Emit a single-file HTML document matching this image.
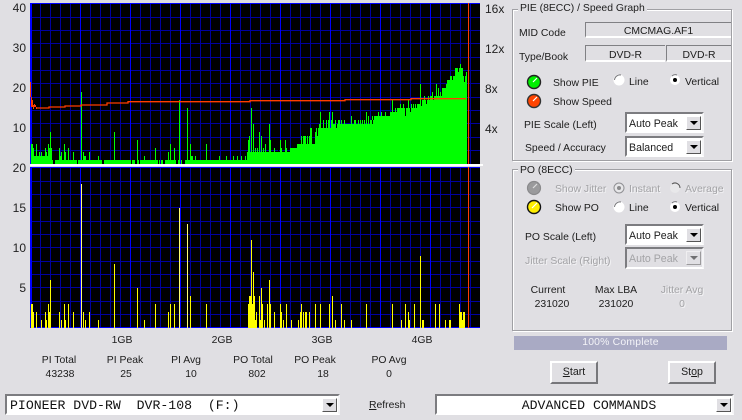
<!DOCTYPE html>
<html><head><meta charset="utf-8"><title>Scan</title>
<style>
html,body{margin:0;padding:0;background:#e0dfe3;}
#r{position:relative;width:742px;height:420px;overflow:hidden;background:#e0dfe3;font-family:"Liberation Sans",sans-serif;font-size:10.4px;color:#1c1c1c;}
.t{position:absolute;white-space:nowrap;line-height:14px;height:14px;margin-top:2px;}
.c{transform:translateX(-50%);}
.ax{font-size:12px;color:#222;margin-top:1px;}
.d{color:#a3a3a6;text-shadow:1px 1px 0 #f4f4f6;}
.g{position:absolute;border:1px solid #a0a0a4;box-shadow:1px 1px 0 #fff,inset 1px 1px 0 #fff;}
.lg{position:absolute;background:#e0dfe3;padding:0 2px;line-height:14px;white-space:nowrap;}
.f{position:absolute;box-sizing:border-box;border-top:1px solid #808084;border-left:1px solid #808084;border-bottom:2px solid #fff;background:#e0dfe3;text-align:center;}
.s{position:absolute;box-sizing:border-box;background:#fff;border:2px solid;border-color:#7c7c80 #f4f4f6 #fff #7c7c80;padding-left:2px;line-height:20px;font-size:10.6px;white-space:nowrap;}
.s i{position:absolute;right:1px;top:2px;width:15px;height:14px;background:#e0dfe3;border:1px solid;box-sizing:border-box;border-color:#fff #555 #555 #fff;}
.s i:after{content:"";position:absolute;left:3px;top:4px;border:4px solid transparent;border-top:4px solid #000;border-bottom:0;}
.b{position:absolute;box-sizing:border-box;border:2px solid;border-color:#fff #77777b #77777b #fff;background:#e0dfe3;text-align:center;line-height:19px;font-size:10.6px;}
.mono{font-family:"Liberation Mono",monospace;font-size:13.2px;color:#111;}
svg{position:absolute;left:0;top:0;}
</style></head><body><div id="r">

<svg width="742" height="420" shape-rendering="crispEdges">
<rect x="30" y="3" width="450" height="161" fill="#000"/>
<rect x="30" y="167" width="450" height="161" fill="#000"/>
<path fill="none" stroke="#0000a0" d="M40.5 3V164M50.5 3V164M60.5 3V164M70.5 3V164M90.5 3V164M100.5 3V164M110.5 3V164M120.5 3V164M140.5 3V164M150.5 3V164M160.5 3V164M170.5 3V164M190.5 3V164M200.5 3V164M210.5 3V164M220.5 3V164M240.5 3V164M250.5 3V164M260.5 3V164M270.5 3V164M290.5 3V164M300.5 3V164M310.5 3V164M320.5 3V164M340.5 3V164M350.5 3V164M360.5 3V164M370.5 3V164M390.5 3V164M400.5 3V164M410.5 3V164M420.5 3V164M440.5 3V164M450.5 3V164M460.5 3V164M470.5 3V164
M30 17.5H480M30 30.5H480M30 43.5H480M30 57.5H480M30 70.5H480M30 83.5H480M30 97.5H480M30 110.5H480M30 123.5H480M30 137.5H480M30 150.5H480
M40.5 167V328M50.5 167V328M60.5 167V328M70.5 167V328M90.5 167V328M100.5 167V328M110.5 167V328M120.5 167V328M140.5 167V328M150.5 167V328M160.5 167V328M170.5 167V328M190.5 167V328M200.5 167V328M210.5 167V328M220.5 167V328M240.5 167V328M250.5 167V328M260.5 167V328M270.5 167V328M290.5 167V328M300.5 167V328M310.5 167V328M320.5 167V328M340.5 167V328M350.5 167V328M360.5 167V328M370.5 167V328M390.5 167V328M400.5 167V328M410.5 167V328M420.5 167V328M440.5 167V328M450.5 167V328M460.5 167V328M470.5 167V328
M30 181.5H480M30 194.5H480M30 207.5H480M30 221.5H480M30 234.5H480M30 247.5H480M30 261.5H480M30 274.5H480M30 287.5H480M30 301.5H480M30 314.5H480"/>
<path fill="none" stroke="#0000ff" d="M80.5 3V164M130.5 3V164M180.5 3V164M230.5 3V164M280.5 3V164M330.5 3V164M380.5 3V164M430.5 3V164M80.5 167V328M130.5 167V328M180.5 167V328M230.5 167V328M280.5 167V328M330.5 167V328M380.5 167V328M430.5 167V328M30 3.5H480M30 167.5H480M30 327.5H480"/>
<rect x="30" y="3" width="2" height="161" fill="#0000ff"/><rect x="30" y="167" width="2" height="161" fill="#0000ff"/>

<path fill="#00ff00" d="M31 160H53V164H31ZM55 160H77V164H55ZM78 160H102V164H78ZM104 160H131V164H104ZM132 160H135V164H132ZM137 160H139V164H137ZM140 160H158V164H140ZM159 160H160V164H159ZM161 160H163V164H161ZM165 160H176V164H165ZM178 160H180V164H178ZM181 160H182V164H181ZM185 160H250V164H185Z
M32 156H52V160H32ZM59 156H62V160H59ZM64 156H66V160H64ZM73 156H74V160H73ZM83 156H86V160H83ZM89 156H90V160H89ZM98 156H99V160H98ZM144 156H145V160H144ZM168 156H169V160H168ZM190 156H193V160H190ZM195 156H196V160H195ZM219 156H220V160H219ZM226 156H227V160H226ZM233 156H234V160H233ZM237 156H238V160H237ZM241 156H242V160H241ZM245 156H246V160H245ZM247 156H250V160H247Z"/>
<path fill="none" stroke="#00ff00" d="M31.5 144V160M32.5 144V160M33.5 148V160M36.5 144V160M39.5 152V160M41.5 152V160M45.5 148V160M46.5 152V160M48.5 144V160M49.5 148V160M50.5 132V160M51.5 148V160M59.5 148V160M61.5 152V160M64.5 144V160M65.5 152V160M68.5 148V160M73.5 152V160M81.5 92V160M83.5 152V160M85.5 156V160M89.5 152V160M98.5 156V160M114.5 132V160M137.5 140V160M144.5 156V160M155.5 148V160M168.5 152V160M170.5 144V160M174.5 148V160M179.5 100V160M187.5 108V160M190.5 144V160M206.5 144V160M247.5 152V160M248.5 140V160M249.5 136V160"/>
<path fill="#00ff00" d="M250 164V152H290V148H297V144H315V132H318V128H333V124H370V120H375V116H390V112H397V108H417V104H422V100H430V96H442V88H447V80H450V76H455V68H460V64H461V68H463V76H466V72H467V164Z"/>
<path fill="none" stroke="#00ff00" d="M251.5 108V152M253.5 124V152M255.5 148V152M257.5 148V152M259.5 132V152M261.5 136V152M263.5 148V152M265.5 144V152M269.5 124V152M270.5 140V152M274.5 148V152M280.5 140V152M281.5 148V152M285.5 140V152M286.5 148V152M291.5 148V152M301.5 136V144M303.5 136V144M304.5 136V144M305.5 136V144M307.5 136V144M309.5 136V144M310.5 128V144M311.5 128V144M316.5 128V132M319.5 124V132M320.5 112V132M323.5 120V132M326.5 120V132M328.5 120V132M329.5 112V132M331.5 120V132M332.5 112V132M335.5 120V132M338.5 120V132M339.5 120V132M341.5 120V132M344.5 120V132M351.5 116V132M354.5 120V132M355.5 120V132M358.5 120V132M360.5 120V132M362.5 120V132M364.5 120V132M366.5 112V132M368.5 116V132M372.5 116V132M374.5 116V132M378.5 112V120M381.5 112V120M385.5 112V120M392.5 100V120M395.5 108V120M400.5 104V120M403.5 104V120M408.5 100V120M411.5 104V120M413.5 104V120M415.5 104V120M420.5 84V104M424.5 96V108M428.5 96V108M432.5 92V100M436.5 84V100M438.5 88V100M440.5 92V100M446.5 84V100"/>
<path fill="none" stroke="#000" d="M278.5 144V152M300.5 140V144M312.5 128V136M317.5 128V136M327.5 124V128M336.5 124V128M363.5 120V124M372.5 120V124M389.5 112V116M405.5 108V116M410.5 108V112M421.5 100V106M426.5 100V104M433.5 96V100M441.5 88V92M452.5 76V80M458.5 68V72M464.5 76V82"/>

<path fill="none" stroke="#ff3c00" d="M30.5 82V97M31.5 97V107M32.5 100V107M33.5 105V109M34.5 104V107M35.5 105V107M36.5 107V109"/>
<path fill="none" stroke="#ff3c00" stroke-width="1.3" shape-rendering="auto" d="M36 108H49V107H65V106H81V105H107V103H128V101.7H250V100.7H345V99.7H411V98.7H466"/>
<rect x="468" y="3" width="1" height="161" fill="#ff3c00"/>
<rect x="468" y="167" width="1" height="161" fill="#ff3c00"/>

<path fill="none" stroke="#ffff00" d="M31.5 304V328M32.5 304V328M33.5 312V328M36.5 312V328M41.5 320V328M45.5 312V328M46.5 320V328M48.5 304V328M49.5 312V328M50.5 280V328M59.5 312V328M61.5 320V328M64.5 304V328M65.5 320V328M68.5 304V328M73.5 312V328M83.5 312V328M85.5 320V328M89.5 312V328M98.5 320V328M114.5 264V328M137.5 288V328M144.5 320V328M155.5 304V328M168.5 312V328M170.5 304V328M174.5 304V328M190.5 296V328M206.5 304V328M248.5 304V328M249.5 296V328M250.5 296V328M251.5 240V328M252.5 304V328M253.5 272V328M254.5 296V328M255.5 320V328M256.5 312V328M259.5 296V328M260.5 320V328M261.5 288V328M262.5 304V328M264.5 320V328M267.5 304V328M269.5 280V328M270.5 304V328M274.5 312V328M280.5 304V328M281.5 312V328M283.5 320V328M286.5 304V328M291.5 320V328M298.5 320V328M300.5 312V328M301.5 304V328M303.5 312V328M305.5 312V328M306.5 312V328M309.5 312V328M315.5 304V328M320.5 304V328M329.5 304V328M332.5 296V328M335.5 320V328M341.5 304V328M344.5 320V328M351.5 320V328M366.5 304V328M392.5 304V328M401.5 320V328M405.5 304V328M408.5 312V328M409.5 320V328M414.5 304V328M420.5 256V328M422.5 320V328M423.5 320V328M435.5 304V328M439.5 304V328M445.5 320V328M449.5 320V328M450.5 320V328M459.5 304V328M460.5 312V328M461.5 312V328M462.5 320V328M463.5 312V328M464.5 312V328"/>
<path fill="none" stroke="#ffff70" d="M81.5 184V328M179.5 208V328M187.5 224V328"/>

<rect x="30" y="164" width="453" height="2" fill="#fff"/>
</svg>

<div class="t ax" style="right:716px;top:0">40</div>
<div class="t ax" style="right:716px;top:40px">30</div>
<div class="t ax" style="right:716px;top:80px">20</div>
<div class="t ax" style="right:716px;top:120px">10</div>
<div class="t ax" style="right:716px;top:160px">20</div>
<div class="t ax" style="right:716px;top:200px">15</div>
<div class="t ax" style="right:716px;top:240px">10</div>
<div class="t ax" style="right:716px;top:280px">5</div>
<div class="t ax" style="left:485px;top:1px">16x</div>
<div class="t ax" style="left:485px;top:41px">12x</div>
<div class="t ax" style="left:485px;top:81px">8x</div>
<div class="t ax" style="left:485px;top:121px">4x</div>

<div class="t c" style="left:122px;top:332px">1GB</div>
<div class="t c" style="left:222px;top:332px">2GB</div>
<div class="t c" style="left:322px;top:332px">3GB</div>
<div class="t c" style="left:422px;top:332px">4GB</div>

<div class="t c" style="left:59px;top:352px">PI Total</div><div class="t c" style="left:60px;top:366px">43238</div>
<div class="t c" style="left:125px;top:352px">PI Peak</div><div class="t c" style="left:126px;top:366px">25</div>
<div class="t c" style="left:186px;top:352px">PI Avg</div><div class="t c" style="left:191px;top:366px">10</div>
<div class="t c" style="left:253px;top:352px">PO Total</div><div class="t c" style="left:257px;top:366px">802</div>
<div class="t c" style="left:315px;top:352px">PO Peak</div><div class="t c" style="left:323px;top:366px">18</div>
<div class="t c" style="left:389px;top:352px">PO Avg</div><div class="t c" style="left:389px;top:366px">0</div>

<div class="g" style="left:512px;top:9px;width:218px;height:150px"></div>
<div class="lg" style="left:518px;top:2px">PIE (8ECC) / Speed Graph</div>
<div class="t" style="left:519px;top:25px">MID Code</div>
<div class="f" style="left:585px;top:22px;width:146px;height:16px;line-height:17px">CMCMAG.AF1</div>
<div class="t" style="left:519px;top:49px">Type/Book</div>
<div class="f" style="left:585px;top:45px;width:80px;height:17px;line-height:19px">DVD-R</div>
<div class="f" style="left:666px;top:45px;width:65px;height:17px;line-height:19px">DVD-R</div>

<svg width="742" height="420">
<circle cx="534" cy="82" r="6.5" fill="#00ee00" stroke="#222" stroke-width="1.4"/><path d="M533 82L537 78" stroke="#fff" stroke-width="1.2"/>
<circle cx="534" cy="101" r="6.5" fill="#ff4400" stroke="#333" stroke-width="1.4"/><path d="M533 101L537 97" stroke="#fff" stroke-width="1.2"/>
<circle cx="534" cy="188" r="6.5" fill="#9a9a9c" stroke="#8a8a8c" stroke-width="1.2"/><path d="M533 188L537 184" stroke="#ddd" stroke-width="1.2"/>
<circle cx="534" cy="207" r="6.5" fill="#ffee00" stroke="#111" stroke-width="1.4"/><path d="M532 208L537 203" stroke="#fff" stroke-width="1.2"/>
<g fill="#fff" stroke="none">
<circle cx="619" cy="80" r="5.5"/><circle cx="675" cy="80" r="5"/>
<circle cx="619" cy="207" r="5.5"/><circle cx="675" cy="207" r="5"/>
<circle cx="675" cy="188" r="5" fill="#e8e8ea"/>
</g>
<g fill="none" stroke="#77777b" stroke-width="1">
<path d="M614.5 80A5.5 5.5 0 0 1 621 75"/><path d="M672 76A5 5 0 0 1 677 75"/>
<path d="M614.5 207A5.5 5.5 0 0 1 621 202"/><path d="M672 203A5 5 0 0 1 677 202"/>
<path d="M672 184A5 5 0 0 1 680 188" stroke="#555"/>
</g>
<circle cx="675" cy="80" r="2" fill="#000"/><circle cx="675" cy="207" r="2" fill="#000"/>
<circle cx="619" cy="188" r="5" fill="#e6e6e8" stroke="#909094"/><circle cx="619" cy="188" r="2" fill="#8a8a8c"/>
</svg>

<div class="t" style="left:553px;top:75px">Show PIE</div>
<div class="t" style="left:629px;top:74px">Line</div>
<div class="t" style="left:685px;top:74px">Vertical</div>
<div class="t" style="left:553px;top:94px">Show Speed</div>
<div class="t" style="left:524px;top:117px">PIE Scale (Left)</div>
<div class="s" style="left:625px;top:112px;width:79px;height:21px">Auto Peak<i></i></div>
<div class="t" style="left:525px;top:140px">Speed / Accuracy</div>
<div class="s" style="left:625px;top:136px;width:79px;height:21px">Balanced<i></i></div>

<div class="g" style="left:512px;top:169px;width:218px;height:160px"></div>
<div class="lg" style="left:518px;top:164px">PO (8ECC)</div>
<div class="t d" style="left:555px;top:181px">Show Jitter</div>
<div class="t d" style="left:629px;top:181px">Instant</div>
<div class="t d" style="left:685px;top:181px">Average</div>
<div class="t" style="left:555px;top:200px">Show PO</div>
<div class="t" style="left:629px;top:200px">Line</div>
<div class="t" style="left:685px;top:200px">Vertical</div>
<div class="t" style="left:525px;top:229px">PO Scale (Left)</div>
<div class="s" style="left:625px;top:224px;width:79px;height:21px">Auto Peak<i></i></div>
<div class="t d" style="left:525px;top:253px">Jitter Scale (Right)</div>
<div class="s" style="left:625px;top:247px;width:79px;height:22px;background:#e0dfe3;color:#a3a3a6">Auto Peak<i style="filter:opacity(.5)"></i></div>
<div class="t c" style="left:548px;top:282px">Current</div><div class="t c" style="left:552px;top:296px">231020</div>
<div class="t c" style="left:616px;top:282px">Max LBA</div><div class="t c" style="left:616px;top:296px">231020</div>
<div class="t c d" style="left:682px;top:282px">Jitter Avg</div><div class="t c d" style="left:682px;top:296px">0</div>

<div class="t" style="left:514px;top:334px;width:213px;height:14px;background:#a9aac4;color:#f4f4f8;text-align:center;letter-spacing:.2px">100% Complete</div>

<div class="b" style="left:550px;top:361px;width:48px;height:23px"><u>S</u>tart</div>
<div class="b" style="left:668px;top:361px;width:48px;height:23px">St<u>o</u>p</div>

<div class="s mono" style="left:5px;top:394px;width:335px;height:21px;padding-left:3px;font-size:13.2px;white-space:pre">PIONEER DVD-RW  DVR-108  (F:)<i></i></div>
<div class="t" style="left:369px;top:397px"><u>R</u>efresh</div>
<div class="s mono" style="left:435px;top:394px;width:299px;height:21px;text-align:center;padding-left:9px;padding-right:0;font-size:13.2px">ADVANCED COMMANDS<i></i></div>

</div></body></html>
